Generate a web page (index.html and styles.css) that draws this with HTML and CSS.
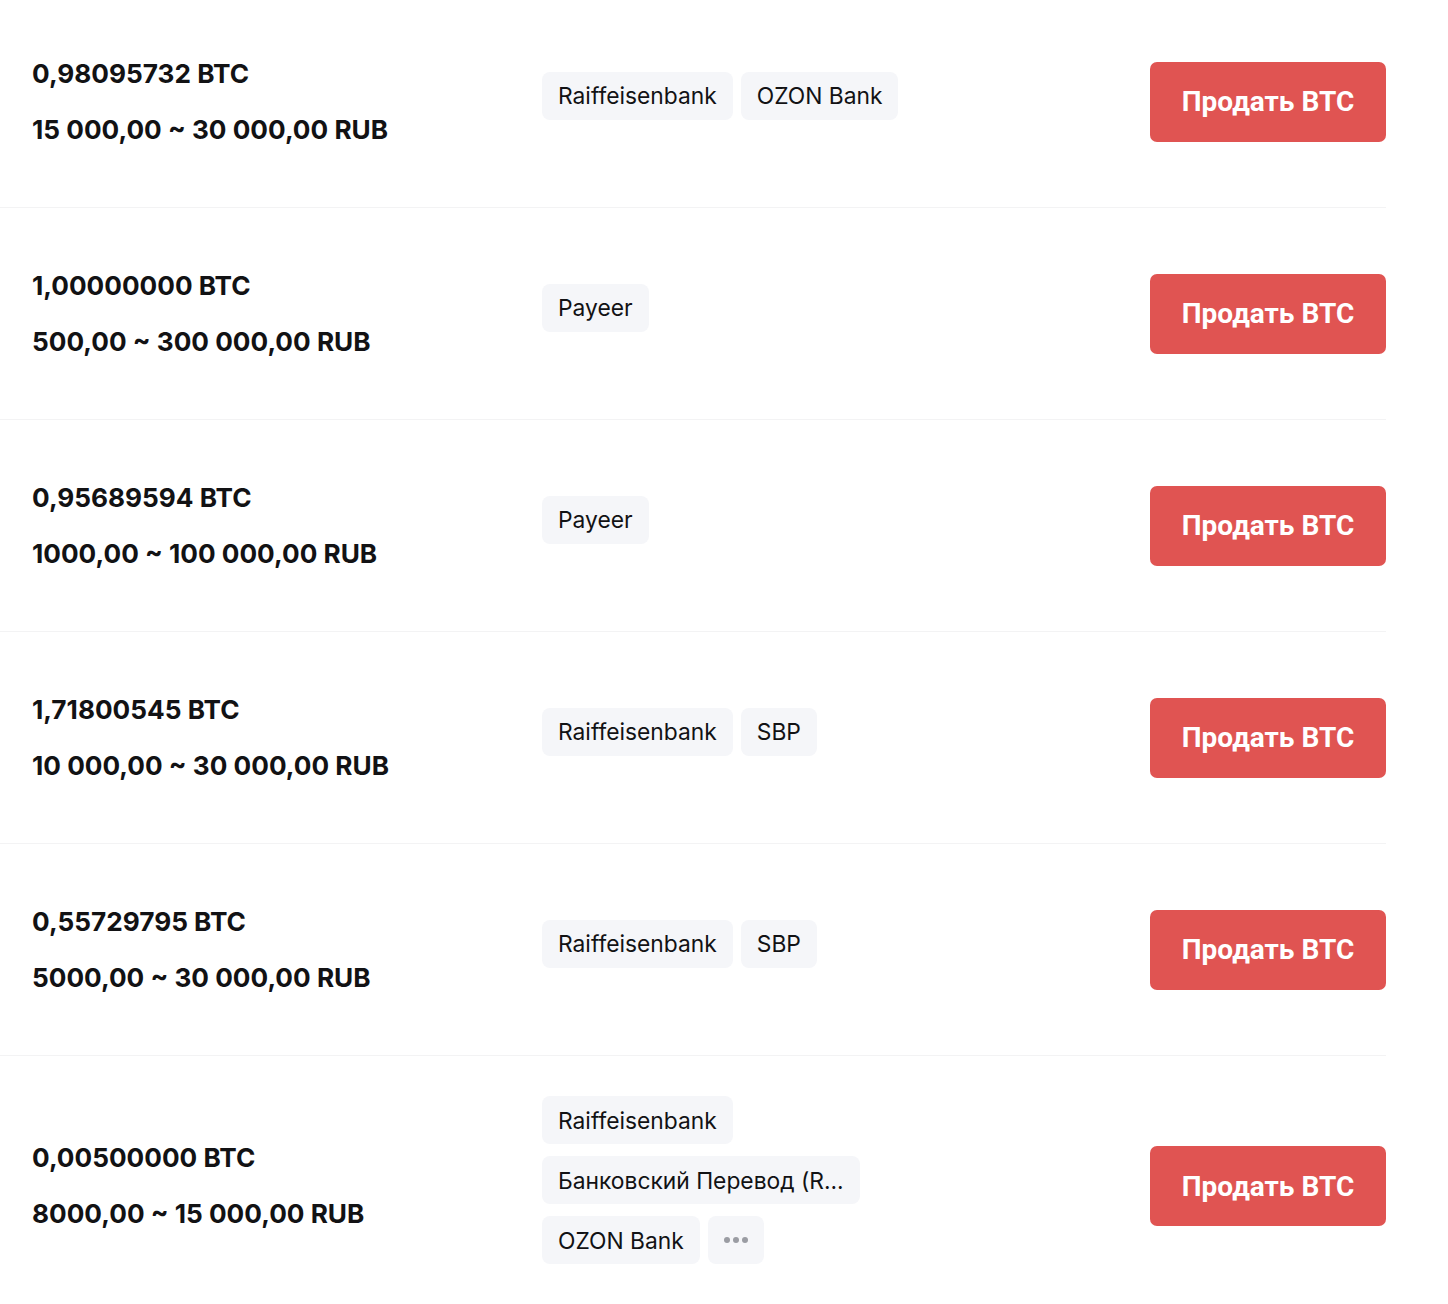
FILE: index.html
```html
<!DOCTYPE html>
<html lang="ru">
<head>
  <meta charset="UTF-8" />
  <meta name="viewport" content="width=device-width, initial-scale=1.0"/>
  <title>P2P — Продать BTC</title>
  <link rel="stylesheet" href="styles.css">
</head>
<body>
  <div class="offers">
    <div class="offer">
      <div class="limits">
        <div class="amount">0,98095732 BTC</div>
        <div class="range">15 000,00 ~ 30 000,00 RUB</div>
      </div>
      <div class="methods">
        <span class="tag">Raiffeisenbank</span>
        <span class="tag">OZON Bank</span>
      </div>
      <button class="sell">Продать BTC</button>
    </div>

    <div class="offer">
      <div class="limits">
        <div class="amount">1,00000000 BTC</div>
        <div class="range">500,00 ~ 300 000,00 RUB</div>
      </div>
      <div class="methods">
        <span class="tag">Payeer</span>
      </div>
      <button class="sell">Продать BTC</button>
    </div>

    <div class="offer">
      <div class="limits">
        <div class="amount">0,95689594 BTC</div>
        <div class="range">1000,00 ~ 100 000,00 RUB</div>
      </div>
      <div class="methods">
        <span class="tag">Payeer</span>
      </div>
      <button class="sell">Продать BTC</button>
    </div>

    <div class="offer">
      <div class="limits">
        <div class="amount">1,71800545 BTC</div>
        <div class="range">10 000,00 ~ 30 000,00 RUB</div>
      </div>
      <div class="methods">
        <span class="tag">Raiffeisenbank</span>
        <span class="tag">SBP</span>
      </div>
      <button class="sell">Продать BTC</button>
    </div>

    <div class="offer">
      <div class="limits">
        <div class="amount">0,55729795 BTC</div>
        <div class="range">5000,00 ~ 30 000,00 RUB</div>
      </div>
      <div class="methods">
        <span class="tag">Raiffeisenbank</span>
        <span class="tag">SBP</span>
      </div>
      <button class="sell">Продать BTC</button>
    </div>

    <div class="offer">
      <div class="limits">
        <div class="amount">0,00500000 BTC</div>
        <div class="range">8000,00 ~ 15 000,00 RUB</div>
      </div>
      <div class="methods stacked">
        <div class="tag-row"><span class="tag">Raiffeisenbank</span></div>
        <div class="tag-row"><span class="tag">Банковский Перевод (R...</span></div>
        <div class="tag-row">
          <span class="tag">OZON Bank</span>
          <span class="tag more"><i></i><i></i><i></i></span>
        </div>
      </div>
      <button class="sell">Продать BTC</button>
    </div>
  </div>
</body>
</html>
```

FILE: styles.css
```css
:root {
  --text: #121214;
  --tag-bg: #f5f6f9;
  --sell: #e05452;
  --line: #f3f3f4;
}

body {
  margin: 0;
  background: #fff;
  color: var(--text);
  font-family: Inter, 'Noto Sans', sans-serif;
}

.offers {
  width: 1386px;
}

.offer {
  display: grid;
  grid-template-columns: 510px 1fr auto;
  align-items: center;
  min-height: 212px;
  padding: 0 0 0 32px;
  border-bottom: 1px solid var(--line);
  box-sizing: border-box;
}

/* first row is cut off a little at the top of the list */
.offer:first-child {
  min-height: 208px;
  padding-bottom: 4px;
}

.offer:last-child {
  padding-top: 40px;
  padding-bottom: 40px;
  min-height: 0;
  border-bottom: none;
}

.limits {
  display: flex;
  flex-direction: column;
  gap: 24px;
  font-size: 26.2px;
  font-weight: 700;
  line-height: 32px;
}

.methods {
  display: flex;
  flex-wrap: wrap;
  gap: 8px;
}

.methods.stacked {
  flex-direction: column;
  gap: 0;
}

.tag-row {
  display: flex;
  gap: 8px;
}

.tag {
  display: inline-flex;
  align-items: center;
  height: 48px;
  padding: 0 16px;
  margin-bottom: 12px;
  background: var(--tag-bg);
  border-radius: 8px;
  font-size: 22.8px;
  font-weight: 400;
  white-space: nowrap;
}

.tag.more {
  width: 56px;
  padding: 0;
  justify-content: center;
  gap: 3px;
}

.tag.more i {
  width: 6px;
  height: 6px;
  border-radius: 50%;
  background: #9a9ca3;
}

.sell {
  width: 236px;
  height: 80px;
  border: none;
  border-radius: 7px;
  background: var(--sell);
  color: #fff;
  font-family: Roboto, Inter, sans-serif;
  font-size: 28px;
  font-weight: 700;
  cursor: pointer;
}
```
